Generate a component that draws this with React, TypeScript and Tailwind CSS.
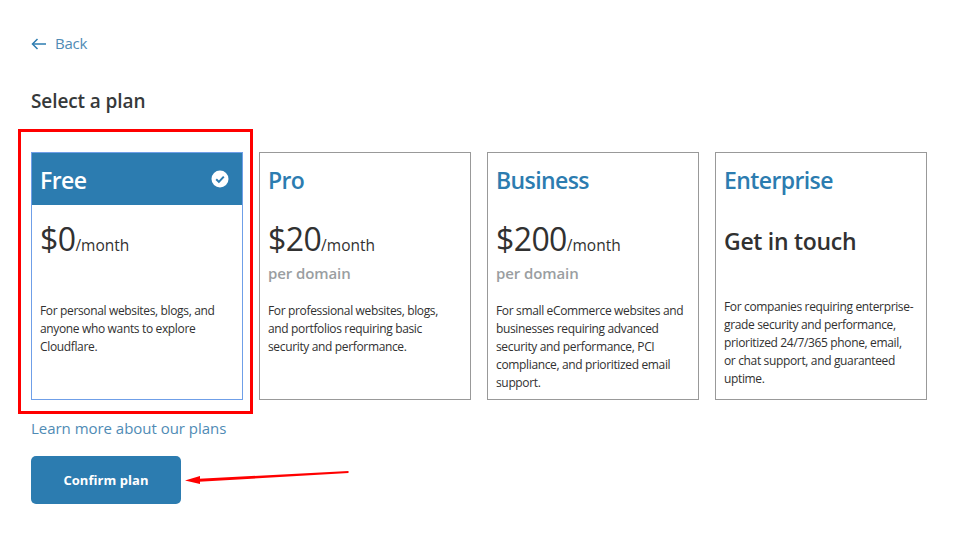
const plans = [
  {
    name: 'Free',
    price: '$0',
    perDomain: false,
    text: 'For personal websites, blogs, and anyone who wants to explore Cloudflare.',
    selected: true,
  },
  {
    name: 'Pro',
    price: '$20',
    perDomain: true,
    text: 'For professional websites, blogs, and portfolios requiring basic security and performance.',
  },
  {
    name: 'Business',
    price: '$200',
    perDomain: true,
    text: 'For small eCommerce websites and businesses requiring advanced security and performance, PCI compliance, and prioritized email support.',
  },
  {
    name: 'Enterprise',
    text: 'For companies requiring enterprise-grade security and performance, prioritized 24/7/365 phone, email, or chat support, and guaranteed uptime.',
  },
]

function PlanCard({ plan }: { plan: (typeof plans)[number] }) {
  return (
    <div className={'h-[248px] w-[212px] border bg-white ' + (plan.selected ? 'border-[#6f9fe8]' : 'border-[#999]')}>
      {/* Header */}
      <div className={'flex h-[52px] items-center justify-between pt-[2px] pr-[13px] pl-2 ' + (plan.selected ? 'bg-[#2c7cb0] text-white' : 'text-[#2c7cb0]')}>
        <span className="text-[23px] font-semibold tracking-[-0.6px]">{plan.name}</span>
        {plan.selected && (
          <svg width="18" height="18" viewBox="0 0 18 18" className="-mt-[2px]">
            <circle cx="9" cy="9" r="8.5" fill="#fff" />
            <path d="M5.2 9.2 L7.9 11.9 L12.8 6.6" fill="none" stroke="#2c7cb0" strokeWidth="2" />
          </svg>
        )}
      </div>
      <div className="px-2 text-[#313131]">
        {plan.price ? (
          <>
            <div className="mt-[13px] flex h-[38px] items-baseline pt-0.5">
              <span className="text-[32px] leading-[38px] tracking-[-0.6px]">{plan.price}</span>
              <span className="text-[15.5px] font-medium">/month</span>
            </div>
            <div className="mt-[7px] h-[20px] text-[15px] leading-[20px] font-semibold tracking-[-0.1px] text-[#9a9ea1]">
              {plan.perDomain ? 'per domain' : ''}
            </div>
          </>
        ) : (
          <div className="flex h-[63px] items-start pt-[19px] text-[23px] leading-[34px] font-semibold tracking-[-0.3px]">Get in touch</div>
        )}
        <p className={'max-w-[191px] text-[12px] leading-[18px] tracking-[-0.35px] ' + (plan.price ? 'mt-[19px]' : 'mt-[30px]')}>{plan.text}</p>
      </div>
    </div>
  )
}

export default function App() {
  return (
    <div className="relative h-[558px] w-[965px] overflow-hidden bg-white pt-[33px] pl-[31px] font-['Open_Sans',sans-serif]">
      <a className="flex h-[20px] items-center gap-[8px] text-[15px] tracking-[-0.2px] text-[#4f8bb5]">
        <svg width="16" height="12" viewBox="0 0 16 12" className="mt-[1px]" fill="none" stroke="#2c7cb0" strokeWidth="1.5">
          <path d="M15 6 H2" />
          <path d="M6.5 1 L1.5 6 L6.5 11" />
        </svg>
        Back
      </a>
      <h1 className="mt-[36px] h-[24px] text-[19px] leading-[24px] font-semibold tracking-[-0.1px] text-[#36393a]">Select a plan</h1>

      <div className="mt-[39px] flex gap-[16px]">
        {plans.map((p) => (
          <PlanCard key={p.name} plan={p} />
        ))}
      </div>

      <a className="mt-[18px] block h-[20px] text-[15px] leading-[20px] tracking-[-0.03px] text-[#4f8bb5]">Learn more about our plans</a>
      <button className="mt-[18px] h-[48px] w-[150px] rounded-[5px] bg-[#2c7cb0] pt-[2px] text-[13px] font-bold tracking-[0.05px] text-white">Confirm plan</button>

      {/* Annotations on top of the page */}
      <div className="absolute top-[129px] left-[18px] h-[285px] w-[235px] border-[3px] border-[#f00]" />
      <svg className="absolute top-[468px] left-[184px]" width="168" height="18" viewBox="0 0 168 18">
        <path d="M164.5 3 L164.5 5 L15 13.8 L15 10.8 Z" fill="#f00" />
        <path d="M1 12.5 L16 8 L16 16 Z" fill="#f00" />
      </svg>
    </div>
  )
}
